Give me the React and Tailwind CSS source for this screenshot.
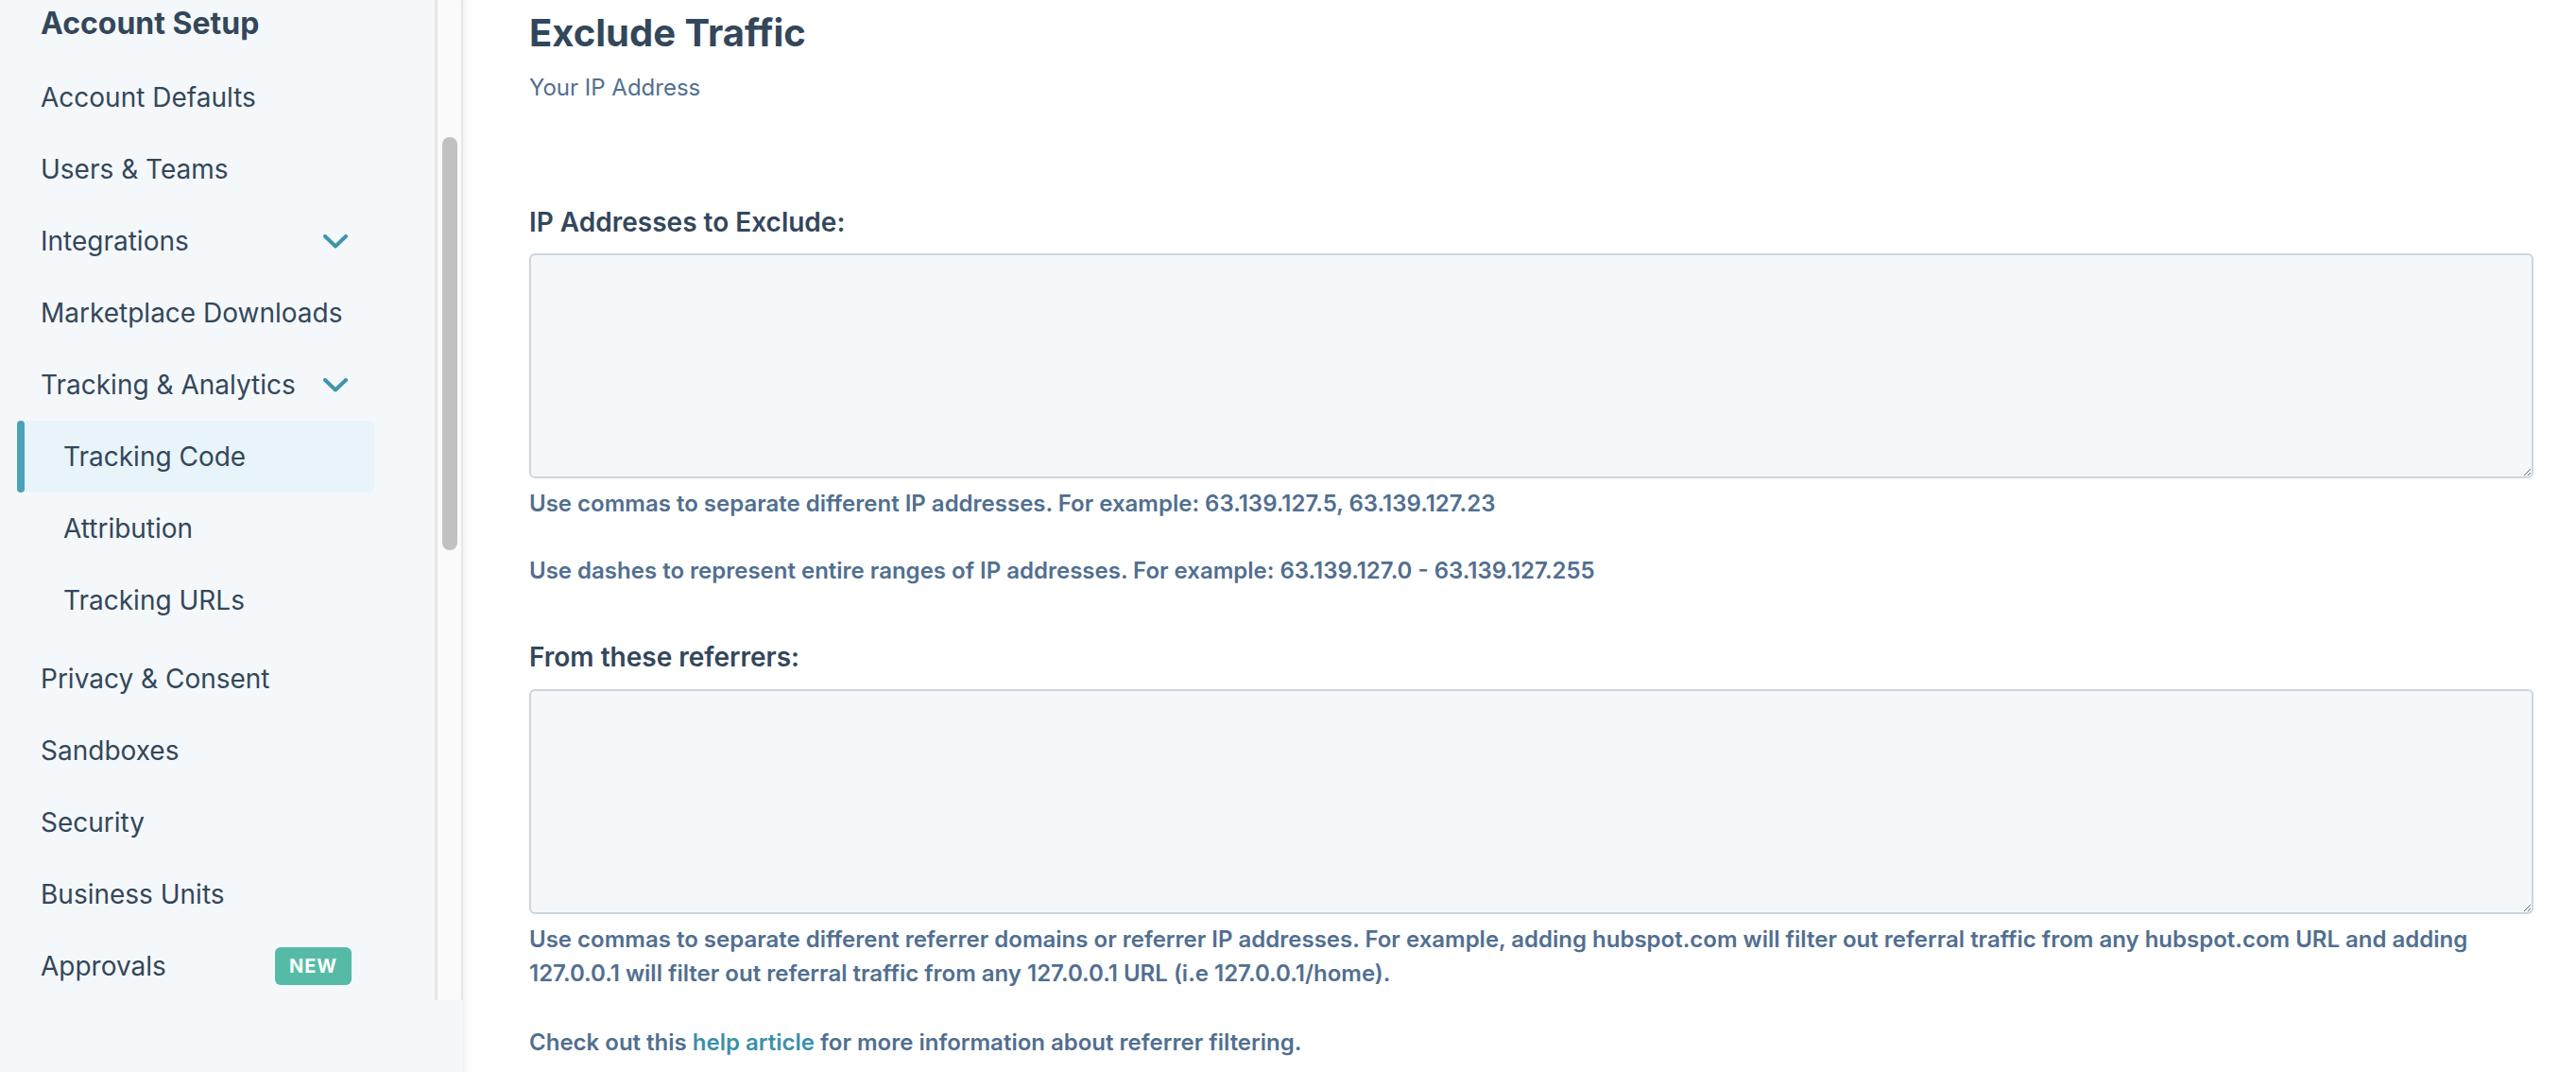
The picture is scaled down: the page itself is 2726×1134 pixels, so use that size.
import React from "react";

const Chevron = () => (
  <svg width="26" height="15" viewBox="0 0 26 15" className="mr-[4px]">
    <polyline points="2,2 13,12.5 24,2" fill="none" stroke="#3f94ad" strokeWidth="4" strokeLinecap="round" strokeLinejoin="round" />
  </svg>
);

const NavItem = ({ label, right }) => (
  <div className="flex h-[76px] w-[372px] items-center justify-between pl-[43px]">
    <span>{label}</span>
    {right}
  </div>
);

const SubItem = ({ label, active }) =>
  active ? (
    <div className="ml-[18px] flex h-[76px] w-[378px] rounded-[6px] bg-[#e8f4f9]">
      <div className="w-[8px] rounded-full bg-[#4aa2b8]" />
      <div className="flex items-center pl-[41px]">{label}</div>
    </div>
  ) : (
    <div className="flex h-[76px] items-center pl-[67px]">{label}</div>
  );

const Sidebar = () => (
  <aside className="flex w-[490px] shrink-0 flex-col bg-[#f5f8fa]">
    <div className="flex h-[1058px]">
      <nav className="w-[460px] overflow-hidden text-[28px] leading-[76px] text-[#33475b]">
        <div className="pl-[43px] pt-[5px] pb-[20px] text-[32px] leading-[40px] font-bold">Account Setup</div>
        <NavItem label="Account Defaults" />
        <NavItem label="Users & Teams" />
        <NavItem label="Integrations" right={<Chevron />} />
        <NavItem label="Marketplace Downloads" />
        <NavItem label="Tracking & Analytics" right={<Chevron />} />
        <SubItem label="Tracking Code" active />
        <SubItem label="Attribution" />
        <SubItem label="Tracking URLs" />
        <div className="h-[7px]" />
        <NavItem label="Privacy & Consent" />
        <NavItem label="Sandboxes" />
        <NavItem label="Security" />
        <NavItem label="Business Units" />
        <NavItem
          label="Approvals"
          right={
            <span className="flex h-[40px] w-[81px] items-center justify-center rounded-[6px] bg-[#56bba6] text-[20px] leading-none font-bold tracking-[1px] text-white">
              NEW
            </span>
          }
        />
      </nav>
      <div className="w-[30px] border-l-[3px] border-r-[2px] border-[#e6e6e6] bg-[#fafafa] pl-[5px] pt-[145px]">
        <div className="h-[437px] w-[16px] rounded-full bg-[#c1c1c1]" />
      </div>
    </div>
  </aside>
);

const Helper = ({ children, className = "" }) => (
  <p className={`text-[24px] leading-[36px] font-semibold text-[#516f90] ${className}`}>{children}</p>
);

const Field = ({ className = "" }) => (
  <textarea className={`block h-[238px] w-full rounded-[6px] border-2 border-[#cbd6e2] bg-[#f5f8fa] outline-none ${className}`} />
);

export default function App() {
  return (
    <div className="flex h-[1134px] w-full overflow-hidden bg-white font-['Inter',sans-serif]">
      <Sidebar />
      <main className="flex-1 pl-[70px] pr-[45px] text-[#33475b] shadow-[inset_8px_0_8px_-6px_rgba(0,0,0,0.08)]">
        <h1 className="pt-[11px] text-[40px] leading-[48px] font-bold">Exclude Traffic</h1>
        <p className="mt-[18px] text-[24px] leading-[32px] text-[#516f90]">Your IP Address</p>

        <h2 className="mt-[108px] text-[28px] leading-[36px] font-semibold">IP Addresses to Exclude:</h2>
        <Field className="mt-[15px]" />
        <Helper className="mt-[9px]">
          Use commas to separate different IP addresses. For example: 63.139.127.5, 63.139.127.23
        </Helper>
        <Helper className="mt-[35px]">
          Use dashes to represent entire ranges of IP addresses. For example: 63.139.127.0 - 63.139.127.255
        </Helper>

        <h2 className="mt-[55px] text-[28px] leading-[36px] font-semibold">From these referrers:</h2>
        <Field className="mt-[16px]" />
        <Helper className="mt-[9px]">
          Use commas to separate different referrer domains or referrer IP addresses. For example, adding hubspot.com
          will filter out referral traffic from any hubspot.com URL and adding 127.0.0.1 will filter out referral
          traffic from any 127.0.0.1 URL (i.e 127.0.0.1/home).
        </Helper>
        <Helper className="mt-[37px]">
          Check out this{" "}
          <a href="#" className="text-[#3b90a8]">
            help article
          </a>{" "}
          for more information about referrer filtering.
        </Helper>
      </main>
    </div>
  );
}
